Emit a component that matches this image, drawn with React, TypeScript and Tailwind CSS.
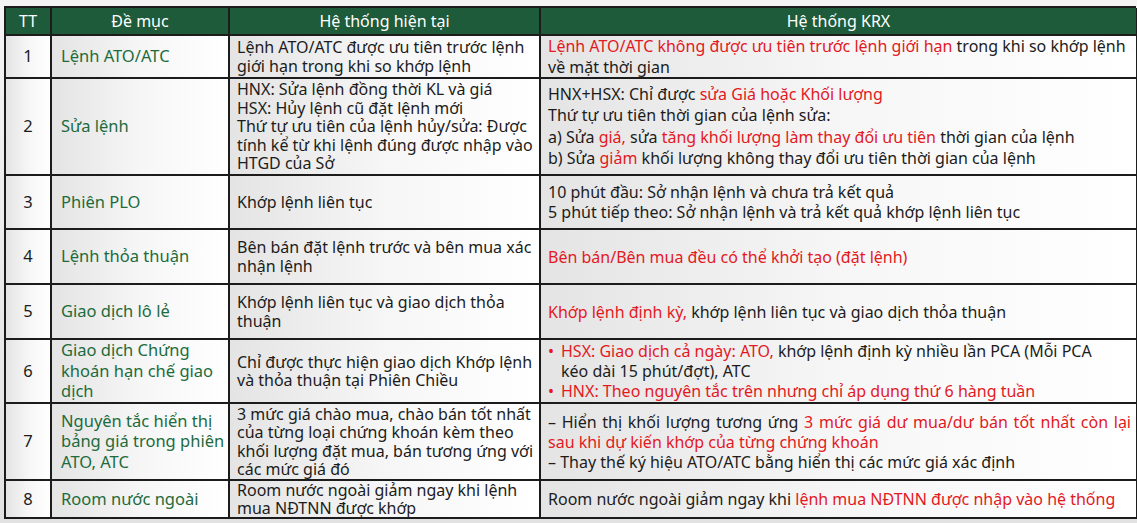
import React from 'react';

const R = ({ children }: { children: React.ReactNode }) => (
  <span className="text-[#e3191e]">{children}</span>
);

const Lines = ({ lines }: { lines: React.ReactNode[] }) => (
  <>
    {lines.map((l, i) => (
      <div key={i} className="whitespace-nowrap">{l}</div>
    ))}
  </>
);

type Row = {
  h: string;
  title: string[];
  current: React.ReactNode;
  krx: React.ReactNode;
};

const rows: Row[] = [
  {
    h: 'h-[43px]',
    title: ['Lệnh ATO/ATC'],
    current: <Lines lines={['Lệnh ATO/ATC được ưu tiên trước lệnh', 'giới hạn trong khi so khớp lệnh']} />,
    krx: (
      <div className="leading-[21px]">
        <Lines
          lines={[
            <><R>Lệnh ATO/ATC không được ưu tiên trước lệnh giới hạn</R> trong khi so khớp lệnh</>,
            'về mặt thời gian',
          ]}
        />
      </div>
    ),
  },
  {
    h: 'h-[97px]',
    title: ['Sửa lệnh'],
    current: (
      <Lines
        lines={[
          'HNX: Sửa lệnh đồng thời KL và giá',
          'HSX: Hủy lệnh cũ đặt lệnh mới',
          'Thứ tự ưu tiên của lệnh hủy/sửa: Được',
          'tính kể từ khi lệnh đúng được nhập vào',
          'HTGD của Sở',
        ]}
      />
    ),
    krx: (
      <div className="leading-[21.5px]">
        <Lines
          lines={[
            <>HNX+HSX: Chỉ được <R>sửa Giá hoặc Khối lượng</R></>,
            'Thứ tự ưu tiên thời gian của lệnh sửa:',
            <>a) Sửa <R>giá,</R> sửa <R>tăng khối lượng làm thay đổi ưu tiên</R> thời gian của lệnh</>,
            <>b) Sửa <R>giảm</R> khối lượng không thay đổi ưu tiên thời gian của lệnh</>,
          ]}
        />
      </div>
    ),
  },
  {
    h: 'h-[54px]',
    title: ['Phiên PLO'],
    current: <Lines lines={['Khớp lệnh liên tục']} />,
    krx: (
      <Lines
        lines={[
          '10 phút đầu: Sở nhận lệnh và chưa trả kết quả',
          '5 phút tiếp theo: Sở nhận lệnh và trả kết quả khớp lệnh liên tục',
        ]}
      />
    ),
  },
  {
    h: 'h-[55px]',
    title: ['Lệnh thỏa thuận'],
    current: <Lines lines={['Bên bán đặt lệnh trước và bên mua xác', 'nhận lệnh']} />,
    krx: <Lines lines={[<R>Bên bán/Bên mua đều có thể khởi tạo (đặt lệnh)</R>]} />,
  },
  {
    h: 'h-[55px]',
    title: ['Giao dịch lô lẻ'],
    current: <Lines lines={['Khớp lệnh liên tục và giao dịch thỏa', 'thuận']} />,
    krx: <Lines lines={[<><R>Khớp lệnh định kỳ,</R> khớp lệnh liên tục và giao dịch thỏa thuận</>]} />,
  },
  {
    h: 'h-[64px]',
    title: ['Giao dịch Chứng', 'khoán hạn chế giao', 'dịch'],
    current: <Lines lines={['Chỉ được thực hiện giao dịch Khớp lệnh', 'và thỏa thuận tại Phiên Chiều']} />,
    krx: (
      <div className="flex flex-col">
        <div className="flex">
          <span className="w-[13px] shrink-0 text-[#e3191e]">•</span>
          <div>
            <div className="whitespace-nowrap">
              <R>HSX: Giao dịch cả ngày: ATO,</R> khớp lệnh định kỳ nhiều lần PCA (Mỗi PCA
            </div>
            <div>kéo dài 15 phút/đợt), ATC</div>
          </div>
        </div>
        <div className="flex">
          <span className="w-[13px] shrink-0 text-[#e3191e]">•</span>
          <div className="whitespace-nowrap">
            <R>HNX: Theo nguyên tắc trên nhưng chỉ áp dụng thứ 6 hàng tuần</R>
          </div>
        </div>
      </div>
    ),
  },
  {
    h: 'h-[77px]',
    title: ['Nguyên tắc hiển thị', 'bảng giá trong phiên', 'ATO, ATC'],
    current: (
      <Lines
        lines={[
          '3 mức giá chào mua, chào bán tốt nhất',
          'của từng loại chứng khoán kèm theo',
          'khối lượng đặt mua, bán tương ứng với',
          'các mức giá đó',
        ]}
      />
    ),
    krx: (
      <div>
        <div className="text-justify [text-align-last:justify]">
          – Hiển thị khối lượng tương ứng <R>3 mức giá dư mua/dư bán tốt nhất còn lại</R>
        </div>
        <div><R>sau khi dự kiến khớp của từng chứng khoán</R></div>
        <div className="whitespace-nowrap">– Thay thế ký hiệu ATO/ATC bằng hiển thị các mức giá xác định</div>
      </div>
    ),
  },
  {
    h: 'h-[38px]',
    title: ['Room nước ngoài'],
    current: (
      <div className="leading-[18px]">
        <Lines lines={['Room nước ngoài giảm ngay khi lệnh', 'mua NĐTNN được khớp']} />
      </div>
    ),
    krx: <Lines lines={[<>Room nước ngoài giảm ngay khi <R>lệnh mua NĐTNN được nhập vào hệ thống</R></>]} />,
  },
];

const cell = 'border-r-2 border-b-2 border-[#1c1c1c] flex items-center bg-gradient-to-r from-[#e4e4e4] via-[#f6f6f6] to-white overflow-hidden';

export default function App() {
  return (
    <div
      className="w-[1137px] h-[523px] bg-gradient-to-b from-[#f4f4f4] to-[#e2e2e2] pt-[6px] pl-[4px] text-[#1c1c1c] text-[16px] leading-[18.5px]"
      style={{ fontFamily: '"Noto Sans", Roboto, sans-serif' }}
    >
      <div className="grid grid-cols-[46px_178px_311px_597px] w-[1132px] border-l-2 border-t-2 border-[#1c1c1c]">
        {/* header */}
        {['TT', 'Đề mục', 'Hệ thống hiện tại', 'Hệ thống KRX'].map((t) => (
          <div
            key={t}
            className="h-[28px] border-r-2 border-b-2 border-[#1c1c1c] bg-[#1d5b3a] text-white text-[16px] flex items-center justify-center"
          >
            {t}
          </div>
        ))}

        {rows.map((r, i) => (
          <React.Fragment key={i}>
            <div className={`${cell} ${r.h} justify-center text-[16.5px]`}>{i + 1}</div>
            <div className={`${cell} ${r.h} pl-[9px] text-[16.5px] leading-[20.5px] text-[#1d6b3c]`}>
              <div>
                {r.title.map((t) => (
                  <div key={t} className="whitespace-nowrap">{t}</div>
                ))}
              </div>
            </div>
            <div className={`${cell} ${r.h} pl-[7px] pr-[3px]`}>
              <div>{r.current}</div>
            </div>
            <div className={`${cell} ${r.h} pl-[7px] pr-[5px] leading-[20px]`}>
              <div className="w-full">{r.krx}</div>
            </div>
          </React.Fragment>
        ))}
      </div>
    </div>
  );
}
